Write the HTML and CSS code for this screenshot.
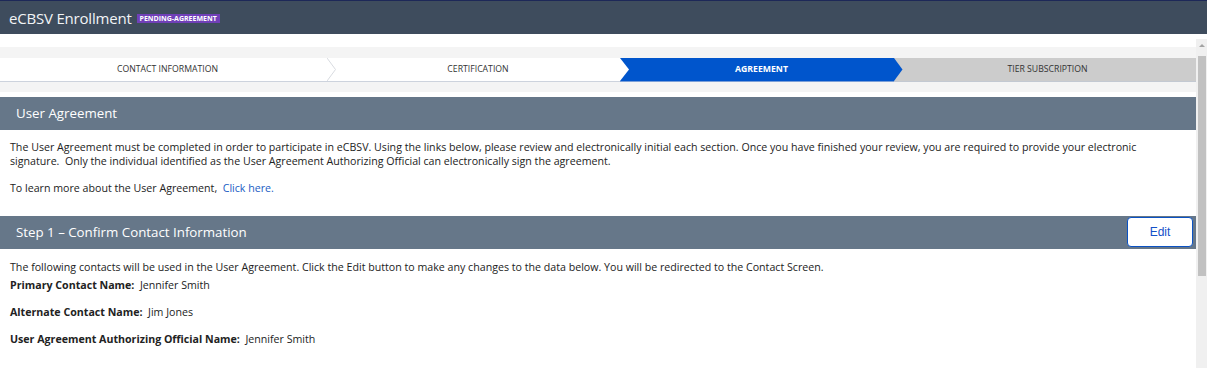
FILE: index.html
```html
<!DOCTYPE html>
<html>
<head>
<meta charset="utf-8">
<link rel="stylesheet" href="styles.css">
</head>
<body>
<header class="topbar">
  <span class="title">eCBSV Enrollment</span>
  <span class="badge">PENDING-AGREEMENT</span>
</header>
<div class="gap"></div>
<div class="viewport">
  <main class="content">
    <div class="steps-band">
      <div class="steps">
        <div class="step s1 done">
          <div class="step-body">CONTACT INFORMATION</div>
          <svg class="tip" width="9" height="24" viewBox="0 0 9 24"><polygon points="0,0 8.5,11.5 0,23" fill="#ffffff"/><polyline points="0,0 8.5,11.5 0,23" fill="none" stroke="#d8dbe0" stroke-width="1"/></svg>
        </div>
        <div class="step s2 done">
          <div class="step-body">CERTIFICATION</div>
          <svg class="tip" width="9" height="24" viewBox="0 0 9 24"><polygon points="0,0 9,11.5 0,23" fill="#ffffff"/></svg>
        </div>
        <div class="step s3 active">
          <div class="step-body">AGREEMENT</div>
          <svg class="tip" width="9" height="24" viewBox="0 0 9 24"><polygon points="0,0 8.5,11.5 0,23" fill="#0055cc"/></svg>
        </div>
        <div class="step s4 todo">
          <div class="step-body">TIER SUBSCRIPTION</div>
        </div>
      </div>
    </div>

    <section class="panel">
      <h2 class="panel-head"><span>User Agreement</span></h2>
      <div class="panel-body intro">
        <p>The User Agreement must be completed in order to participate in eCBSV. Using the links below, please review and electronically initial each section. Once you have finished your review, you are required to provide your electronic signature.&nbsp; Only the individual identified as the User Agreement Authorizing Official can electronically sign the agreement.</p>
        <p>To learn more about the User Agreement,&nbsp; <a href="#" class="link">Click here.</a></p>
      </div>
    </section>

    <section class="panel">
      <h2 class="panel-head"><span>Step 1 – Confirm Contact Information</span><button class="edit">Edit</button></h2>
      <div class="panel-body contacts">
        <p class="lead">The following contacts will be used in the User Agreement. Click the Edit button to make any changes to the data below. You will be redirected to the Contact Screen.</p>
        <p class="field"><b>Primary Contact Name:</b>&nbsp; Jennifer Smith</p>
        <p class="field"><b>Alternate Contact Name:</b>&nbsp; Jim Jones</p>
        <p class="field"><b>User Agreement Authorizing Official Name:</b>&nbsp; Jennifer Smith</p>
      </div>
    </section>
  </main>
  <div class="scrollbar">
    <div class="arrow"></div>
    <div class="thumb"></div>
  </div>
</div>
</body>
</html>
```
FILE: styles.css
```css
html, body {
  margin: 0;
  padding: 0;
  height: 100%;
  overflow: hidden;
}
body {
  font-family: "Open Sans", "Noto Sans", sans-serif;
  color: #222;
  background: #fff;
  display: flex;
  flex-direction: column;
}
.topbar {
  height: 33px;
  border-top: 1px solid #1d2858;
  background: #3e4c5d;
  display: flex;
  align-items: center;
  padding-left: 9px;
  flex: none;
}
.title {
  color: #f2f4f6;
  font-size: 15px;
  letter-spacing: -0.2px;
}
.badge {
  margin-left: 5px;
  background: #7040b8;
  color: #fff;
  font-size: 7px;
  font-weight: 700;
  line-height: 9px;
  height: 9px;
  padding: 0 3px;
  letter-spacing: 0;
  margin-top: 1px;
}
.gap {
  height: 5px;
  flex: none;
}
.viewport {
  flex: 1;
  display: flex;
  min-height: 0;
}
.content {
  flex: 1;
  min-width: 0;
  overflow: hidden;
  padding-top: 8px;
}
.scrollbar {
  width: 11px;
  flex: none;
  background: #f0f0f0;
  display: flex;
  flex-direction: column;
  align-items: center;
}
.arrow {
  margin-top: 5px;
  width: 0;
  height: 0;
  border-left: 3px solid transparent;
  border-right: 3px solid transparent;
  border-bottom: 3px solid #a3a3a3;
}
.thumb {
  margin-top: 9px;
  width: 8px;
  height: 220px;
  background: #c1c1c1;
  margin-left: 1px;
}
.steps-band {
  background: #f4f4f4;
  padding: 11px 0 10px;
}
.steps {
  display: flex;
  height: 24px;
}
.step {
  display: flex;
  position: relative;
  height: 24px;
  font-size: 8.7px;
  text-transform: uppercase;
  color: #333;
}
.step-body {
  flex: 1;
  display: flex;
  align-items: center;
  justify-content: center;
  box-sizing: border-box;
  padding-bottom: 2px;
  background: linear-gradient(to bottom, var(--bg) 23px, var(--line) 23px);
}
.tip {
  flex: none;
  display: block;
}
.s1 { width: 336px; z-index: 4; }
.s2 { width: 302px; margin-left: -9px; z-index: 3; }
.s3 { width: 283px; margin-left: -9px; z-index: 2; }
.s4 { flex: 1; margin-left: -9px; z-index: 1; }
.s1 .step-body { padding-left: 8px; }
.s2 .step-body, .s3 .step-body, .s4 .step-body { padding-left: 9px; }
.s4 .step-body { padding-right: 4px; }
.done { --bg: #ffffff; --line: #cdd3dd; }
.active { --bg: #0055cc; --line: #7a9fd8; color: #fff; font-weight: 700; }
.todo { --bg: #cccccc; --line: #c3c9d2; }

.panel { margin-top: 5px; }
.panel + .panel { margin-top: 0; }
.panel-head {
  margin: 0;
  height: 33px;
  background: #667789;
  color: #fff;
  font-size: 13.3px;
  font-weight: 400;
  display: flex;
  align-items: center;
  justify-content: space-between;
  padding-left: 16px;
  padding-right: 3px;
}
.panel-head span { margin-top: -1px; }
.panel-body {
  padding: 10px 10px 0;
  font-size: 10.65px;
  line-height: 14px;
}
.panel-body p { margin: 0; }
.intro { padding-bottom: 21px; }
.intro p + p { margin-top: 13px; }
.link { color: #1a5dc4; text-decoration: none; }
.edit {
  align-self: flex-start;
  margin-top: 1px;
  width: 66px;
  height: 30px;
  box-sizing: border-box;
  background: #fff;
  border: 1px solid #0a52c4;
  border-radius: 4px;
  color: #1450c8;
  font-family: "Liberation Sans", Arial, sans-serif;
  font-size: 12px;
  padding: 0;
}
.contacts { padding-top: 11px; }
.contacts .field { margin-top: 4px; }
.contacts .field + .field { margin-top: 13px; }
.field b { font-weight: 700; }
```
